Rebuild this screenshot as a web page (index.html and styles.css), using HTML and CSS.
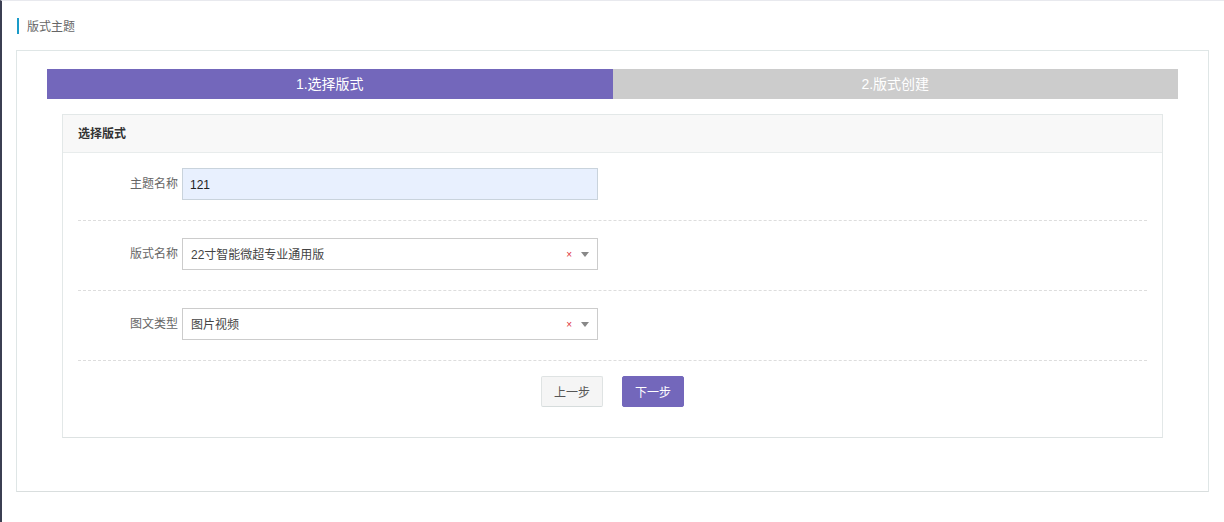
FILE: index.html
```html
<!DOCTYPE html>
<html lang="zh-CN">
<head>
<meta charset="utf-8">
<title>版式主题</title>
<link rel="stylesheet" href="styles.css">
</head>
<body>
<div class="page">
  <div class="page-title">版式主题</div>
  <div class="box">
    <div class="steps">
      <div class="step active">1.选择版式</div>
      <div class="step">2.版式创建</div>
    </div>
    <div class="panel">
      <div class="panel-head">选择版式</div>
      <div class="panel-body">
        <div class="form-row first">
          <label class="form-label">主题名称</label>
          <div class="input filled">121</div>
        </div>
        <div class="form-row">
          <label class="form-label">版式名称</label>
          <div class="input select">
            <span class="select-text">22寸智能微超专业通用版</span>
            <span class="clear">×</span>
            <span class="arrow"></span>
          </div>
        </div>
        <div class="form-row">
          <label class="form-label">图文类型</label>
          <div class="input select">
            <span class="select-text">图片视频</span>
            <span class="clear">×</span>
            <span class="arrow"></span>
          </div>
        </div>
        <div class="actions">
          <button class="btn btn-default">上一步</button>
          <button class="btn btn-primary">下一步</button>
        </div>
      </div>
    </div>
  </div>
</div>
</body>
</html>
```

FILE: styles.css
```css
* { box-sizing: border-box; }
html, body { height: 100%; }
body {
  margin: 0;
  background: #fff;
  font-family: "Liberation Sans", "Noto Sans CJK SC", sans-serif;
  font-size: 12px;
  color: #333;
}
.page {
  min-height: 100%;
  border-left: 2px solid #3b3f52;
  border-top: 1px solid #e8e9ee;
  padding-top: 17px;
}
.page-title {
  margin-left: 15px;
  border-left: 2px solid #1a9bc8;
  padding-left: 8px;
  height: 16px;
  line-height: 18px;
  color: #666;
  font-size: 12px;
}
.box {
  margin: 16px 15px 0 14px;
  border: 1px solid #dfe6e6;
  border-bottom-color: #d9dede;
  padding: 18px 30px 53px;
  height: 442px;
}
.steps {
  display: flex;
  height: 30px;
}
.step {
  flex: 1;
  background: #cccccc;
  color: #fff;
  font-size: 14px;
  line-height: 31px;
  text-align: center;
}
.step.active { background: #7367bb; }
.panel {
  margin: 15px 15px 0;
  border: 1px solid #e3e8e8;
  border-bottom-color: #dde2e2;
}
.panel-head {
  height: 38px;
  padding-top: 2px;
  line-height: 35px;
  background: #f8f8f8;
  border-bottom: 1px solid #e8ecec;
  padding-left: 15px;
  font-weight: bold;
  color: #333;
}
.panel-body {
  padding: 0 15px 30px;
}
.form-row {
  display: flex;
  align-items: center;
  padding: 17px 0 20px;
  border-bottom: 1px dashed #dddddd;
}
.form-row.first { padding-top: 15px; }
.form-label {
  width: 100px;
  margin-right: 4px;
  text-align: right;
  color: #666;
  line-height: 16px;
}
.input {
  width: 416px;
  height: 32px;
  border: 1px solid #cccccc;
  padding: 1px 8px 0;
  display: flex;
  align-items: center;
  color: #444;
  line-height: 16px;
}
.input.filled {
  background: #e8f0fe;
  border-color: #c9d3dc;
  color: #222;
  padding-left: 7px;
}
.select-text { flex: 1; padding-top: 1px; }
.clear {
  color: #e0303a;
  font-size: 10px;
  margin-right: 9px;
  margin-top: 1px;
}
.arrow {
  width: 0;
  height: 0;
  border-left: 4px solid transparent;
  border-right: 4px solid transparent;
  border-top: 5px solid #888;
  margin-right: 0;
}
.actions {
  display: flex;
  justify-content: center;
  gap: 19px;
  padding-top: 15px;
}
.btn {
  width: 62px;
  height: 31px;
  font-family: inherit;
  font-size: 12px;
  border-radius: 2px;
  padding: 0;
  cursor: pointer;
}
.btn-default {
  background: #f5f5f5;
  border: 1px solid #dfe3e3;
  border-bottom-color: #d6dcdc;
  color: #555;
}
.btn-primary {
  background: #7367bb;
  border: 1px solid #7367bb;
  color: #fff;
}
```
